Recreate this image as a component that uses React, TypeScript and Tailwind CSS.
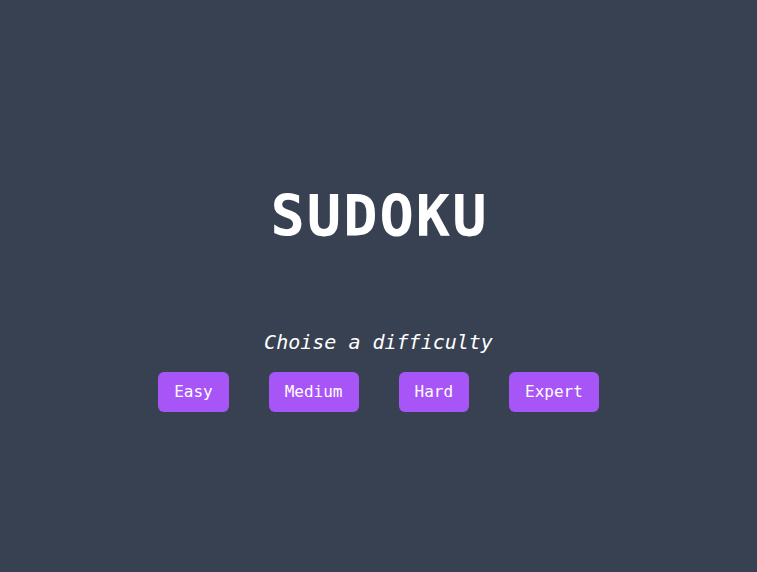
import React from "react";

const levels = ["Easy", "Medium", "Hard", "Expert"];

export default function App() {
  return (
    <div
      className="h-screen w-full bg-[#374151] flex flex-col items-center pt-[186px]"
      style={{ fontFamily: '"DejaVu Sans Mono", "Liberation Mono", monospace' }}
    >
      <h1 className="text-[57px] leading-[60px] font-bold text-white tracking-[2px] pl-[2px]">SUDOKU</h1>
      <p className="mt-[82px] text-xl leading-7 italic text-white">Choise a difficulty</p>
      <div className="mt-4 flex gap-10">
        {levels.map((l) => (
          <button
            key={l}
            className="bg-[#a855f7] text-white text-base leading-6 px-4 py-2 rounded-md"
          >
            {l}
          </button>
        ))}
      </div>
    </div>
  );
}
